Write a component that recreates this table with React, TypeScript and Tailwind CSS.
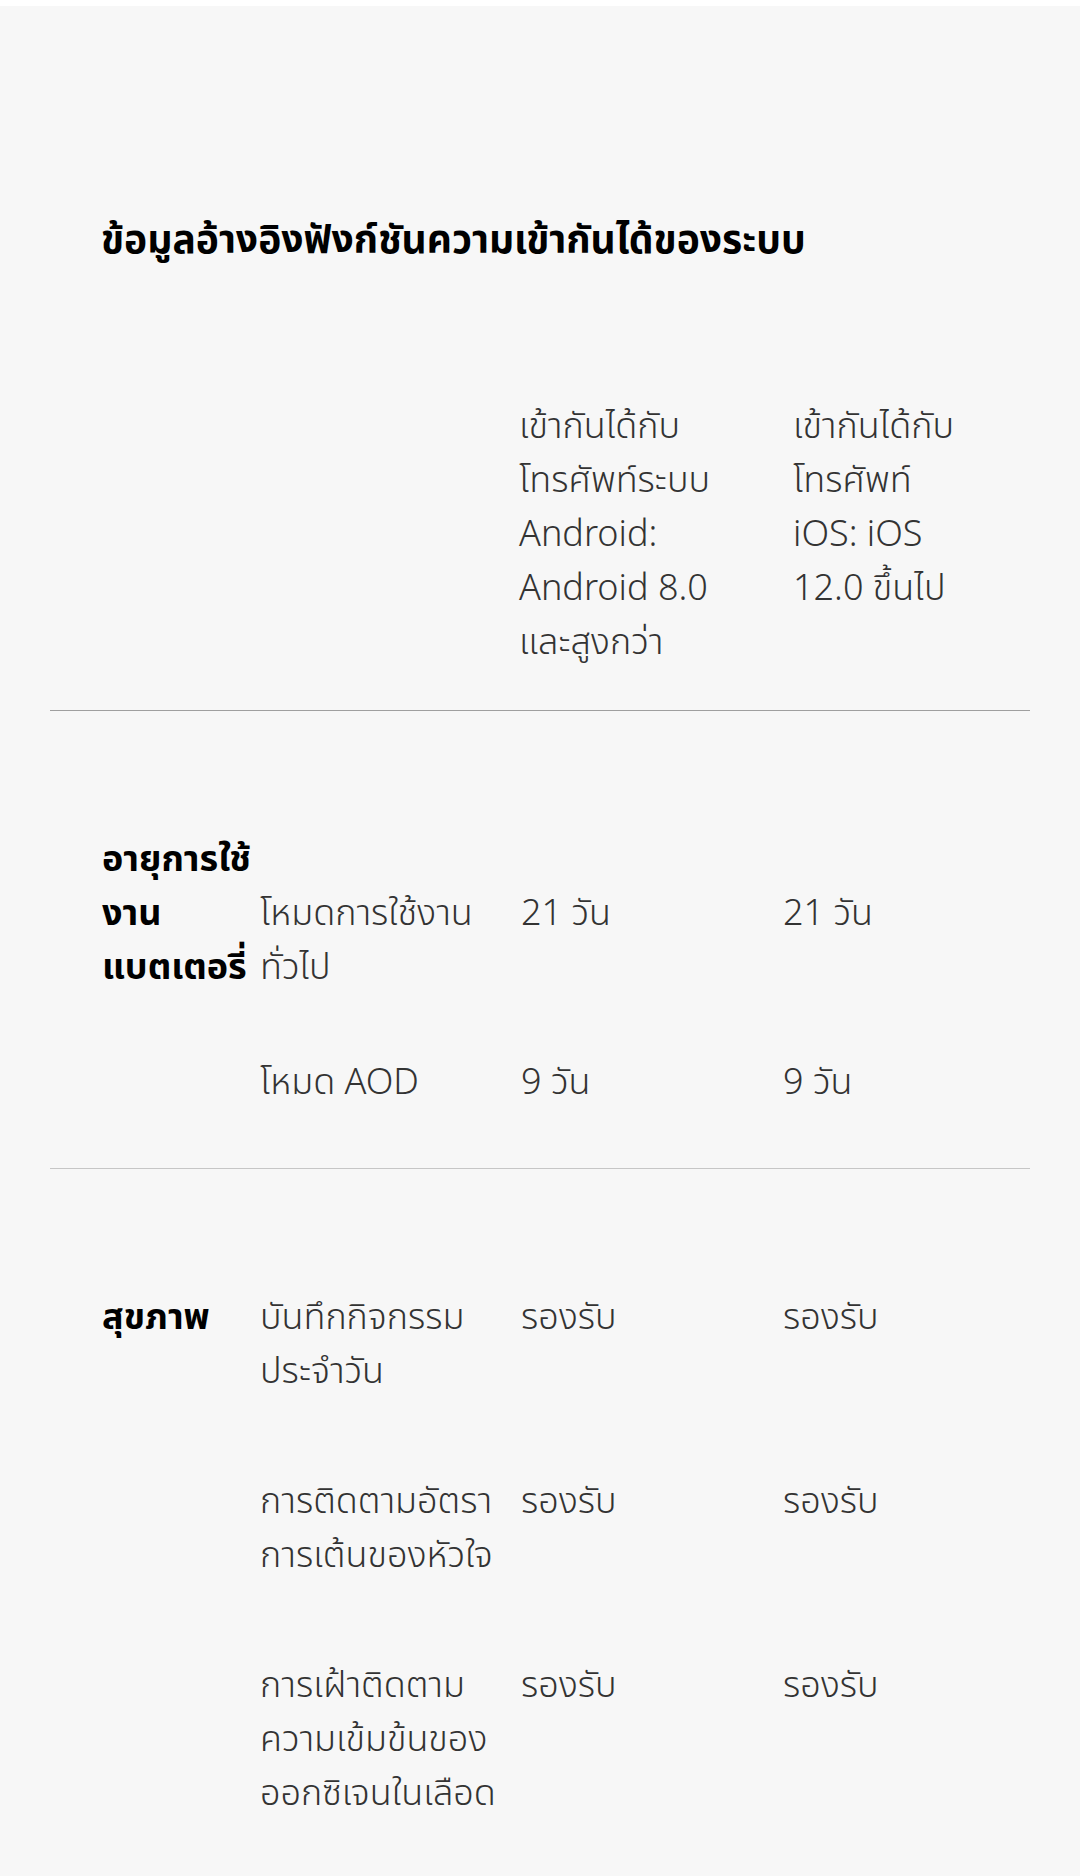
const body = "text-[36px] leading-[54px] font-light text-[#333333] whitespace-nowrap"
const head = "text-[36px] leading-[54px] font-bold text-black whitespace-nowrap"

const Lines = ({ lines, className }: { lines: string[]; className?: string }) => (
  <div className={className}>
    {lines.map((line, i) => (
      <div key={i}>{line}</div>
    ))}
  </div>
)

const SubRow = ({ label, android, ios, className = '' }: { label: string[]; android: string; ios: string; className?: string }) => (
  <div className={`flex ${className}`}>
    <Lines lines={label} className={`w-[261px] ${body}`} />
    <div className={`w-[262px] ${body}`}>{android}</div>
    <div className={body}>{ios}</div>
  </div>
)

export default function App() {
  return (
    <div className="min-h-screen border-t-[6px] border-white bg-[#f7f7f7] font-['Noto_Sans_Thai','Noto_Sans',sans-serif]">
      <div className="px-[50px]">
        <h2 className="pl-[51px] pt-[206px] text-[39px] font-bold leading-[60px] text-black">
          ข้อมูลอ้างอิงฟังก์ชันความเข้ากันได้ของระบบ
        </h2>

        {/* compatibility header */}
        <div className="flex pb-[40px] pt-[128px]">
          <div className="w-[469px]" />
          <Lines
            lines={['เข้ากันได้กับ', 'โทรศัพท์ระบบ', 'Android:', 'Android 8.0', 'และสูงกว่า']}
            className={`w-[274px] ${body}`}
          />
          <Lines lines={['เข้ากันได้กับ', 'โทรศัพท์', 'iOS: iOS', '12.0 ขึ้นไป']} className={body} />
        </div>

        <div className="h-px bg-[#9f9f9f]" />

        {/* battery */}
        <div className="flex pb-[58px] pl-[52px] pt-[122px]">
          <Lines lines={['อายุการใช้', 'งาน', 'แบตเตอรี่']} className={`w-[158px] ${head}`} />
          <div className="flex flex-col pt-[54px]">
            <SubRow label={['โหมดการใช้งาน', 'ทั่วไป']} android="21 วัน" ios="21 วัน" />
            <SubRow label={['โหมด AOD']} android="9 วัน" ios="9 วัน" className="mt-[61px]" />
          </div>
        </div>

        <div className="h-px bg-[#c6c6c6]" />

        {/* health */}
        <div className="flex pb-[64px] pl-[52px] pt-[122px]">
          <Lines lines={['สุขภาพ']} className={`w-[158px] ${head}`} />
          <div className="flex flex-col">
            <SubRow label={['บันทึกกิจกรรม', 'ประจำวัน']} android="รองรับ" ios="รองรับ" />
            <SubRow label={['การติดตามอัตรา', 'การเต้นของหัวใจ']} android="รองรับ" ios="รองรับ" className="mt-[76px]" />
            <SubRow
              label={['การเฝ้าติดตาม', 'ความเข้มข้นของ', 'ออกซิเจนในเลือด']}
              android="รองรับ"
              ios="รองรับ"
              className="mt-[76px]"
            />
          </div>
        </div>
      </div>
    </div>
  )
}
